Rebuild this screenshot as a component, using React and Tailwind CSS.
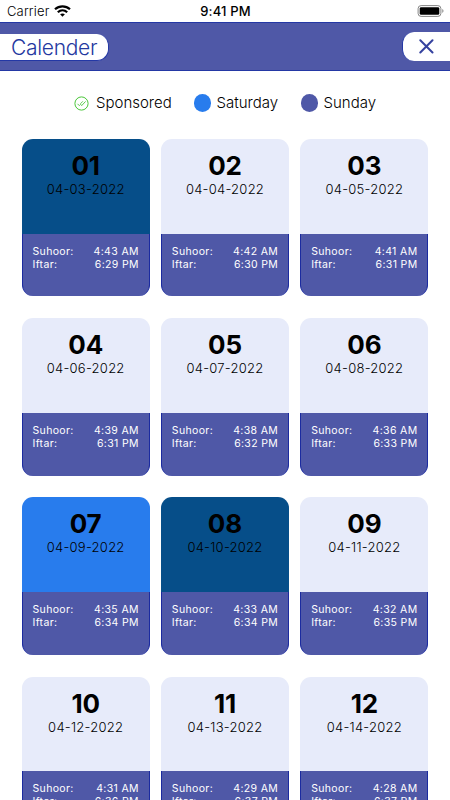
const days = [
  { day: '01', date: '04-03-2022', suhoor: '4:43 AM', iftar: '6:29 PM', tone: 'sponsored' },
  { day: '02', date: '04-04-2022', suhoor: '4:42 AM', iftar: '6:30 PM' },
  { day: '03', date: '04-05-2022', suhoor: '4:41 AM', iftar: '6:31 PM' },
  { day: '04', date: '04-06-2022', suhoor: '4:39 AM', iftar: '6:31 PM' },
  { day: '05', date: '04-07-2022', suhoor: '4:38 AM', iftar: '6:32 PM' },
  { day: '06', date: '04-08-2022', suhoor: '4:36 AM', iftar: '6:33 PM' },
  { day: '07', date: '04-09-2022', suhoor: '4:35 AM', iftar: '6:34 PM', tone: 'saturday' },
  { day: '08', date: '04-10-2022', suhoor: '4:33 AM', iftar: '6:34 PM', tone: 'sponsored' },
  { day: '09', date: '04-11-2022', suhoor: '4:32 AM', iftar: '6:35 PM' },
  { day: '10', date: '04-12-2022', suhoor: '4:31 AM', iftar: '6:36 PM' },
  { day: '11', date: '04-13-2022', suhoor: '4:29 AM', iftar: '6:37 PM' },
  { day: '12', date: '04-14-2022', suhoor: '4:28 AM', iftar: '6:37 PM' },
];

const tones = {
  sponsored: 'bg-[#064e89]',
  saturday: 'bg-[#287ced]',
  plain: 'bg-[#e7ebfa]',
};

function StatusBar() {
  return (
    <div className="grid h-[22px] shrink-0 grid-cols-3 items-center pl-[7px] pr-[6px] text-[13px] leading-[22px]">
      <div className="flex items-center gap-[5px]">
        <span className="w-[42px] font-light tracking-[0.15px]">Carrier</span>
        <svg width="17" height="12" viewBox="0 0 17 12" fill="none" stroke="#000" strokeWidth="2.2">
          <path d="M1 4.3C5.3.3 11.7.3 16 4.3" />
          <path d="M3.8 7.2c2.7-2.5 6.7-2.5 9.4 0" />
          <path d="M8.5 11.7 6.1 9.3c1.3-1.2 3.5-1.2 4.8 0z" fill="#000" stroke="none" />
        </svg>
      </div>
      <span className="text-center font-medium tracking-[0.15px]">9:41 PM</span>
      <svg className="justify-self-end" width="27" height="12" viewBox="0 0 27 12">
        <rect x="1.1" y=".6" width="22.8" height="10.8" rx="3" fill="none" stroke="#858585" strokeWidth="1" />
        <rect x="2.7" y="2.2" width="19.6" height="7.6" rx="1.4" fill="#000" />
        <path d="M25.3 4.1v3.8c1.6-.7 1.6-3.1 0-3.8z" fill="#858585" />
      </svg>
    </div>
  );
}

function Header() {
  return (
    <header className="flex h-[49px] shrink-0 items-center justify-between border-y border-[#2438a5] bg-[#4f58a7]">
      <h1 className="mt-px h-[27px] w-[108.5px] rounded-r-[12px] border-b border-r border-[#2438a5] bg-white pl-[11px] text-[21px] font-light leading-[27px] tracking-[-0.3px] text-[#2438a0]">
        Calender
      </h1>
      <button className="flex h-[29px] w-[48px] items-center rounded-l-[12px] border-l border-[#2438a5] bg-white pl-[16px]">
        <svg width="15" height="15" viewBox="0 0 15 15" stroke="#35429f" strokeWidth="2" strokeLinecap="round">
          <path d="m1.3 1.3 12.2 12.2M13.5 1.3 1.3 13.5" />
        </svg>
      </button>
    </header>
  );
}

function Legend() {
  return (
    <div className="flex h-[62px] shrink-0 items-center pl-[74px] pt-[2px] text-[15px] font-light leading-[20px]">
      <svg width="15" height="15" viewBox="0 0 15 15" fill="none" stroke="#4ac63a">
        <circle cx="7.5" cy="7.5" r="6.6" strokeWidth="1" />
        <path d="m3.5 7.8 1.8 1.8 1-1M6.5 8.2l1.2 1.4 3.9-4.2M6.4 7.8l2.5-2.5" strokeWidth=".9" />
      </svg>
      <span className="ml-[7px] w-[97.5px]">Sponsored</span>
      <span className="size-[17.5px] rounded-full bg-[#287ced]" />
      <span className="ml-[5.5px] w-[84px]">Saturday</span>
      <span className="size-[17.5px] rounded-full bg-[#4f58a7]" />
      <span className="ml-[5.5px]">Sunday</span>
    </div>
  );
}

function DayCard({ day, date, suhoor, iftar, tone = 'plain' }) {
  return (
    <article className="h-[157.2px]">
      <div className={`h-[94.5px] rounded-t-[11px] pt-[11px] text-center text-black ${tones[tone]}`}>
        <div className="text-[26px] font-bold leading-[32px] tracking-[-0.1px]">{day}</div>
        <div className="text-[13px] font-light leading-[15px] tracking-[0.25px]">{date}</div>
      </div>
      <div className="h-[62.7px] rounded-b-[11px] border-x border-[#1b2ba0] bg-[#4f58a7] px-[10px] pt-[11px] text-[10.5px] leading-[13px] tracking-[0.35px] text-white">
        <div className="flex justify-between">
          <span>Suhoor:</span>
          <span>{suhoor}</span>
        </div>
        <div className="flex justify-between">
          <span>Iftar:</span>
          <span>{iftar}</span>
        </div>
      </div>
    </article>
  );
}

export default function App() {
  return (
    <div className="flex h-[800px] w-[450px] flex-col overflow-hidden bg-white font-['Inter',sans-serif] text-black">
      <StatusBar />
      <Header />
      <Legend />
      <main className="grid shrink-0 grid-cols-3 gap-x-[11px] gap-y-[21.9px] px-[21.5px] pt-[6.3px]">
        {days.map((d) => (
          <DayCard key={d.day} {...d} />
        ))}
      </main>
    </div>
  );
}
